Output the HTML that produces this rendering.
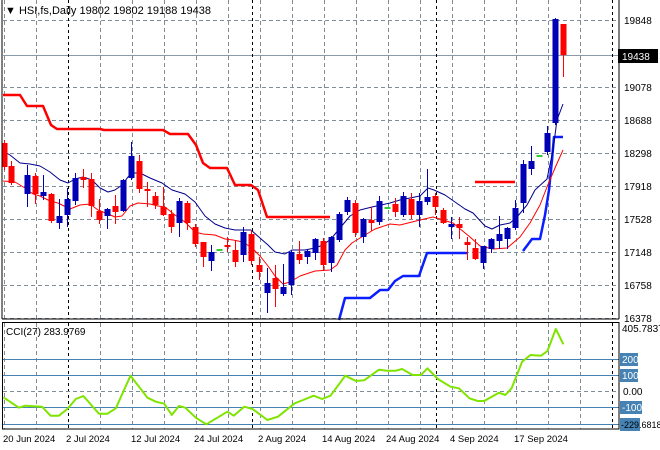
<!DOCTYPE html>
<html><head><meta charset="utf-8"><style>
html,body{margin:0;padding:0;background:#fff;}
svg{display:block;font-family:"Liberation Sans",sans-serif;}
</style></head><body>
<svg id="s" width="660" height="450" xmlns="http://www.w3.org/2000/svg">
<rect width="660" height="450" fill="#fff"/>
<g id="grid"></g>
<g id="lines"></g>
<g id="candles"></g>
<line x1="2" y1="0" x2="2" y2="319" stroke="#000"/>
<line x1="619" y1="0" x2="619" y2="319" stroke="#000"/>
<line x1="2" y1="319" x2="619" y2="319" stroke="#000"/>
<rect x="2.5" y="322.5" width="616.5" height="106.5" fill="none" stroke="#000"/>
<text x="5" y="14" font-size="11" fill="#000">▼ HSI,fs,Daily  19802 19802 19188 19438</text>
<rect x="618" y="49" width="40" height="14" fill="#000"/>
<text x="622" y="60" font-size="10" fill="#fff">19438</text>
<text x="6" y="335" font-size="10" fill="#000">CCI(27) 283.9769</text>
<g id="axis" font-size="10" fill="#000"></g>
</svg>
<script>
const NS="http://www.w3.org/2000/svg";
function el(p,t,a){const e=document.createElementNS(NS,t);for(const k in a)e.setAttribute(k,a[k]);p.appendChild(e);return e;}
const g=document.getElementById('grid'),L=document.getElementById('lines'),C=document.getElementById('candles'),A=document.getElementById('axis');
// horizontal grid main
const prices=[19848,19438,19078,18688,18298,17918,17528,17148,16758,16378];
const py=[20,55,87,120,153,186,219,252,285,318];
prices.forEach((p,i)=>{
 if(i!==1) el(g,'line',{x1:3,y1:py[i]+.5,x2:619,y2:py[i]+.5,stroke:'#7f8c99','stroke-dasharray':'4,3'});
 if(i!==1){const t=el(A,'text',{x:624,y:py[i]+4});t.textContent=p;}
});
el(g,'line',{x1:3,y1:55.5,x2:619,y2:55.5,stroke:'#8a9aa8'});
// vertical grid
[4,36,100,132,164,196,228,260,292,324,356,388,420,452,484,516,548,580].forEach(x=>{
 el(g,'line',{x1:x+.5,y1:0,x2:x+.5,y2:319,stroke:'#7f8c99','stroke-dasharray':'4,3'});
 el(g,'line',{x1:x+.5,y1:323,x2:x+.5,y2:429,stroke:'#7f8c99','stroke-dasharray':'4,3'});
});
[68,252,436,612].forEach(x=>{
 el(g,'line',{x1:x+.5,y1:0,x2:x+.5,y2:319,stroke:'#000','stroke-dasharray':'3,3'});
 el(g,'line',{x1:x+.5,y1:323,x2:x+.5,y2:429,stroke:'#000','stroke-dasharray':'3,3'});
});
// CCI levels
[[359,'200'],[375,'100'],[407,'-100'],[424,'-229']].forEach(([y,t])=>{
 el(g,'line',{x1:3,y1:y+.5,x2:619,y2:y+.5,stroke:'#4682b4'});
 el(A,'rect',{x:620,y:y-6,width:t=='-229'?20:(t.length>3?22:18),height:13,fill:'#4682b4'});
 if(t!=='-229'){const e=el(A,'text',{x:622,y:y+4,fill:'#fff'});e.textContent=t;}
});
el(g,'line',{x1:3,y1:391.5,x2:619,y2:391.5,stroke:'#7f8c99','stroke-dasharray':'4,3'});
let e=el(A,'text',{x:623,y:395});e.textContent='0.00';
e=el(A,'text',{x:622,y:332});e.textContent='405.7837';
e=el(A,'text',{x:621,y:428,'font-size':'9'});e.textContent='-229.6818';
// dates
[[3,'20 Jun 2024'],[66,'2 Jul 2024'],[131,'12 Jul 2024'],[194,'24 Jul 2024'],[258,'2 Aug 2024'],[322,'14 Aug 2024'],[386,'24 Aug 2024'],[450,'4 Sep 2024'],[514,'17 Sep 2024']].forEach(([x,t])=>{const e=el(A,'text',{x:x,y:442,'font-size':'9.5'});e.textContent=t;});
function pl(pts,st,w){el(L,'polyline',{points:pts.map(p=>p.join(',')).join(' '),fill:'none',stroke:st,'stroke-width':w,'stroke-linejoin':'round'});}
pl([[3,95],[20,95],[27,106],[43,106],[51,125],[57,129],[100,129],[104,130],[163,130],[170,134],[188,134],[196,145],[203,163],[210,168],[227,168],[235,185],[251,185],[258,190],[267,217],[330,217]],'#f00',2.5);
pl([[475,182],[515,182]],'#f00',2.5);
pl([[339,320],[345,298],[370,298],[380,290],[388,290],[395,281],[403,276],[419,276],[427,253],[467,253]],'#0a1eff',2.5);
pl([[523,251],[532,239],[540,239],[545,215],[549,190],[552,160],[554,137],[563,137]],'#0a1eff',2.5);
pl([[3,151],[10,155],[20,163],[30,164],[40,166],[50,172],[60,180],[68,183],[75,179],[83,177],[92,180],[100,188],[108,192],[115,190],[122,185],[131,173],[140,173],[150,178],[162,183],[172,190],[185,194],[195,202],[205,216],[215,224],[225,228],[235,230],[251,230],[260,238],[268,245],[275,252],[285,254],[292,250],[305,250],[315,248],[323,245],[331,239],[340,228],[350,216],[360,210],[372,207],[390,203],[400,200],[410,198],[420,196],[428,188],[434,190],[445,195],[455,202],[465,209],[473,213],[485,226],[492,229],[500,225],[510,223],[517,217],[527,205],[535,190],[547,179],[553,150],[557,120],[563,104]],'#00008b',1);
pl([[3,181],[15,182],[25,188],[33,194],[40,196],[50,201],[58,203],[70,209],[80,205],[90,204],[98,210],[108,214],[115,217],[122,216],[130,206],[138,203],[150,204],[158,206],[165,207],[175,215],[185,222],[195,232],[203,234],[215,235],[225,239],[233,240],[243,242],[252,248],[260,256],[268,266],[275,276],[283,284],[290,282],[300,276],[315,271],[330,270],[337,265],[345,250],[352,243],[360,238],[375,229],[390,224],[400,225],[420,220],[433,217],[453,223],[470,237],[480,246],[493,249],[507,248],[513,243],[520,237],[530,223],[540,205],[547,187],[555,168],[563,150]],'#f00',1);
// candles [x, bodyTop, bodyBot, wickHi, wickLo, color]
const B='#0000b4',R='#f00';
const cs=[[4,143,167,140,170,R],[11,166,183,161,185,R],[27,175,194,165,207,B],[35,176,194,173,204,R],[43,192,196,175,200,B],[51,194,221,193,223,R],[59,216,223,199,229,B],[67,199,215,188,227,B],[75,178,201,173,205,B],[83,177,180,169,188,R],[91,179,206,173,217,R],[99,211,220,199,224,R],[107,209,216,208,229,B],[115,206,212,195,224,R],[123,180,211,179,212,B],[131,156,178,142,180,B],[139,161,189,155,193,R],[147,189,191,182,207,R],[155,196,205,192,209,R],[163,207,215,187,216,R],[171,214,227,210,233,R],[179,201,223,198,237,B],[187,203,223,201,230,R],[195,227,244,224,247,R],[203,242,257,242,267,R],[211,252,261,245,271,B],[219,249,251,249,251,'#3c3'],[227,245,247,237,252,R],[235,250,262,240,267,R],[243,232,255,227,262,B],[251,234,261,230,265,R],[259,265,272,257,280,R],[267,283,293,268,313,B],[275,278,289,265,307,R],[283,287,294,264,296,B],[291,252,285,250,295,B],[299,254,260,241,264,R],[307,251,257,249,264,B],[315,239,253,238,260,B],[323,241,265,238,270,R],[331,237,263,236,272,B],[339,214,240,212,242,B],[347,200,212,197,215,B],[355,203,233,200,237,R],[363,219,237,218,243,B],[371,220,223,207,231,R],[379,201,222,196,225,B],[387,207,209,207,209,'#3c3'],[395,204,212,198,217,R],[403,196,215,192,217,B],[411,199,215,193,219,R],[419,201,215,193,227,B],[427,197,202,169,205,B],[435,196,207,193,215,R],[443,210,223,208,224,R],[451,224,227,217,239,B],[459,224,228,217,239,R],[467,242,245,237,260,R],[475,248,259,239,260,R],[483,246,263,246,269,B],[491,239,249,238,253,B],[499,234,241,216,249,B],[507,228,239,227,249,B],[515,208,228,200,230,B],[523,164,203,160,213,B],[531,161,169,146,175,B],[539,155,157,155,157,'#3c3'],[547,133,152,126,155,B],[555,19,123,18,125,B],[563,24,55,24,77,R]];
cs.forEach(([x,t,b,h,l,c])=>{
 el(C,'line',{x1:x+.5,y1:h,x2:x+.5,y2:l,stroke:c,'stroke-width':1});
 el(C,'rect',{x:x-2.5,y:t,width:6,height:Math.max(1,b-t),fill:c});
});
// CCI line
const cz=[[8,517],[45,548],[60,542],[100,545],[120,572],[140,572],[160,552],[180,522],[198,513],[235,566],[255,566],[275,550],[310,452],[350,518],[370,530],[390,536],[408,570],[425,543],[440,548],[465,578],[490,598],[540,560],[555,572],[580,545],[600,552],[635,585],[660,575],[700,535],[720,525],[745,512],[765,522],[785,512],[820,452],[845,468],[865,466],[900,434],[920,437],[940,437],[955,432],[980,450],[1000,450],[1015,430],[1040,462],[1070,485],[1090,490],[1115,520],[1135,528],[1150,528],[1185,503],[1200,510],[1215,490],[1240,410],[1260,390],[1285,392],[1300,378],[1320,312],[1338,358]];
pl(cz.map(([x,y])=>[(x/2.375).toFixed(1),(225+y/3).toFixed(1)]),'#7fe400',2);
</script>
</body></html>
